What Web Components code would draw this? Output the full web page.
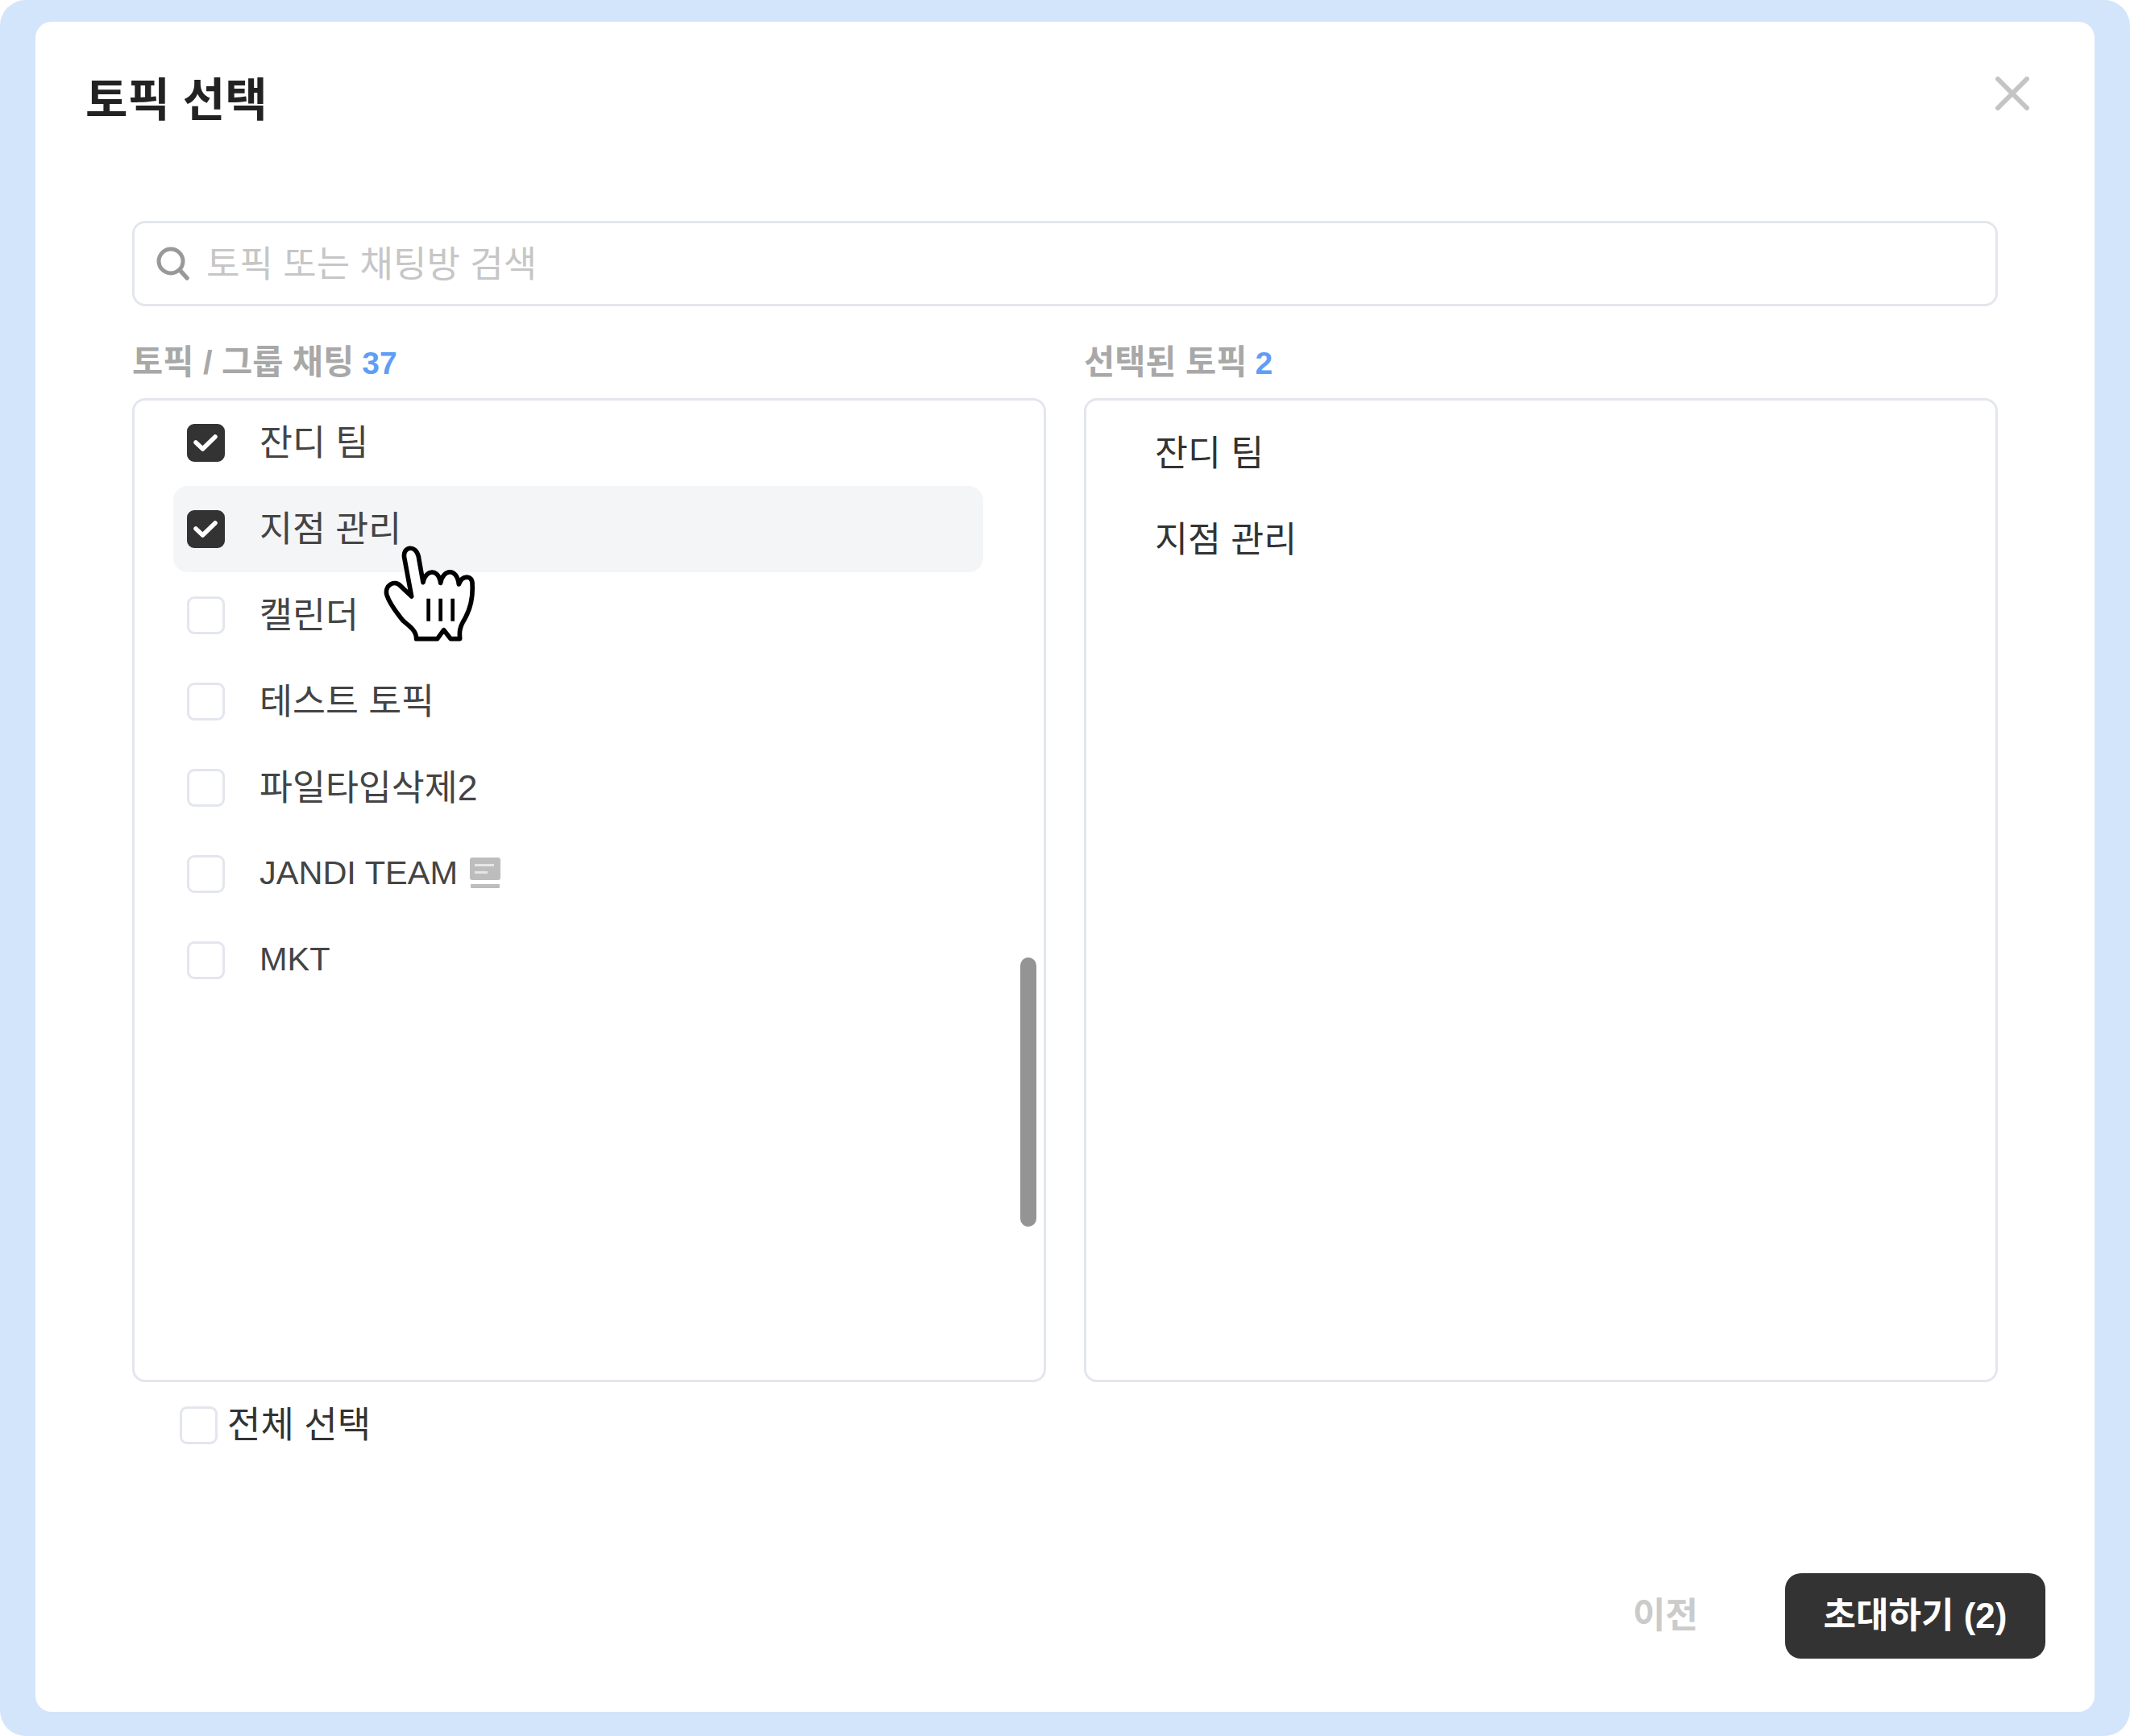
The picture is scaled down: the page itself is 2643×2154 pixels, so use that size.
<!DOCTYPE html>
<html lang="ko">
<head>
<meta charset="utf-8">
<title>토픽 선택</title>
<style>
  html, body { margin: 0; padding: 0; background: #fff; }
  body { font-family: "Liberation Sans", "Noto Sans CJK KR", sans-serif; color: #333; }
</style>
</head>
<body>
<app-frame>
  <topic-dialog heading="토픽 선택">
    <search-box slot="search" placeholder="토픽 또는 채팅방 검색"></search-box>

    <pick-list slot="left" label="토픽 / 그룹 채팅" count="37" scrollbar>
      <topic-row checked>잔디 팀</topic-row>
      <topic-row checked hover>지점 관리</topic-row>
      <topic-row>캘린더</topic-row>
      <topic-row>테스트 토픽</topic-row>
      <topic-row>파일타입삭제2</topic-row>
      <topic-row latin note>JANDI TEAM</topic-row>
      <topic-row latin>MKT</topic-row>
    </pick-list>

    <pick-list slot="right" label="선택된 토픽" count="2" inset>
      <picked-row>잔디 팀</picked-row>
      <picked-row>지점 관리</picked-row>
    </pick-list>

    <select-all slot="all">전체 선택</select-all>

    <dialog-button slot="actions" kind="ghost">이전</dialog-button>
    <dialog-button slot="actions" kind="primary">초대하기 (2)</dialog-button>
  </topic-dialog>
  <hand-cursor></hand-cursor>
</app-frame>

<script>
  const FONT = '"Liberation Sans", "Noto Sans CJK KR", sans-serif';

  class AppFrame extends HTMLElement {
    constructor() {
      super();
      this.attachShadow({ mode: "open" });
      this.shadowRoot.innerHTML =
        "<style>" +
        ":host { display: block; position: relative; width: 2643px; height: 2154px; box-sizing: border-box;" +
        " padding: 27px 44px 30px 44px; background: #d3e5fb; border-radius: 32px; overflow: hidden; }" +
        "</style><slot></slot>";
    }
  }

  class TopicDialog extends HTMLElement {
    constructor() {
      super();
      this.attachShadow({ mode: "open" });
      this.shadowRoot.innerHTML =
        "<style>" +
        ":host { display: flex; flex-direction: column; height: 100%; box-sizing: border-box; background: #fff;" +
        " border-radius: 20px; font-family: " + FONT + "; }" +
        "header { display: flex; justify-content: space-between; align-items: center; height: 188px;" +
        " padding: 0 81px 0 62px; box-sizing: border-box; margin-bottom: 59px; }" +
        "h1 { margin: 0; font-size: 57px; font-weight: 700; color: #222; line-height: 1; position: relative; top: 3px; }" +
        "svg { display: block; width: 42px; height: 42px; margin-top: -10px; }" +
        ".body { padding: 0 120px 0 120px; }" +
        ".cols { display: grid; grid-template-columns: 1134px 1134px; column-gap: 47px; margin-top: 47px; }" +
        ".all { margin-top: 30px; padding-left: 59px; }" +
        "footer { margin-top: auto; display: flex; justify-content: flex-end; align-items: center; padding: 0 61px 66px 0; }" +
        "</style>" +
        "<header><h1></h1>" +
        '<svg viewBox="0 0 42 42"><path d="M3 3 L39 39 M39 3 L3 39" stroke="#c4c4c4" stroke-width="6" stroke-linecap="round" fill="none"/></svg>' +
        "</header>" +
        '<div class="body"><slot name="search"></slot>' +
        '<div class="cols"><slot name="left"></slot><slot name="right"></slot></div>' +
        '<div class="all"><slot name="all"></slot></div></div>' +
        '<footer><slot name="actions"></slot></footer>';
    }

    connectedCallback() {
      this.shadowRoot.querySelector("h1").textContent = this.getAttribute("heading") || "";
    }
  }

  class SearchBox extends HTMLElement {
    constructor() {
      super();
      this.attachShadow({ mode: "open" });
      this.shadowRoot.innerHTML =
        "<style>" +
        ":host { display: flex; align-items: center; height: 106px; box-sizing: border-box; padding-left: 26px;" +
        " border: 3px solid #e3e6ee; border-radius: 16px; background: #fff; }" +
        "svg { width: 42px; height: 42px; flex: none; margin-right: 21px; }" +
        "span { font-size: 45px; color: #c6c6c6; line-height: 1; position: relative; top: 1px; }" +
        "</style>" +
        '<svg viewBox="0 0 42 42" fill="none" stroke="#999" stroke-width="5"><circle cx="19" cy="18" r="15"/><path d="M30 29 L39 39" stroke-linecap="round" stroke-width="5.5"/></svg>' +
        "<span></span>";
    }

    connectedCallback() {
      this.shadowRoot.querySelector("span").textContent = this.getAttribute("placeholder") || "";
    }
  }

  class PickList extends HTMLElement {
    constructor() {
      super();
      this.attachShadow({ mode: "open" });
      this.shadowRoot.innerHTML =
        "<style>" +
        ":host { display: block; }" +
        ".label { display: flex; gap: 10px; height: 46px; align-items: center; font-size: 41.5px; font-weight: 700; color: #a8a8a8; line-height: 1; margin-bottom: 21px; }" +
        ".count { color: #5f9ef5; font-size: 39px; }" +
        ".box { position: relative; height: 1221px; box-sizing: border-box; border: 3px solid #e3e6ee; border-radius: 16px; padding-left: 48px; overflow: hidden; }" +
        ".rows { margin-top: -1.5px; }" +
        ":host([inset]) .box { padding: 13px 0 0 85px; }" +
        ":host([inset]) .rows { margin-top: 0; }" +
        ".bar { display: none; position: absolute; left: 1099px; top: 691px; width: 20px; height: 334px; background: #949494; border-radius: 10px; }" +
        ":host([scrollbar]) .bar { display: block; }" +
        "</style>" +
        '<div class="label"><span class="name"></span><span class="count"></span></div>' +
        '<div class="box"><div class="rows"><slot></slot></div><div class="bar"></div></div>';
    }

    connectedCallback() {
      this.shadowRoot.querySelector(".name").textContent = this.getAttribute("label") || "";
      this.shadowRoot.querySelector(".count").textContent = this.getAttribute("count") || "";
    }
  }

  class CheckBox extends HTMLElement {
    constructor() {
      super();
      this.attachShadow({ mode: "open" });
      this.shadowRoot.innerHTML =
        "<style>" +
        ":host { display: flex; flex: none; width: 47px; height: 47px; box-sizing: border-box; border: 3px solid #e3e6ee; border-radius: 9px; background: #fff; }" +
        ":host([checked]) { background: #333; border-color: #333; }" +
        "svg { display: none; width: 41px; height: 41px; }" +
        ":host([checked]) svg { display: block; }" +
        "</style>" +
        '<svg viewBox="0 0 41 41"><path d="M8 20 L16.5 28 L32 13" fill="none" stroke="#fff" stroke-width="5.5" stroke-linecap="round" stroke-linejoin="round"/></svg>';
    }
  }

  class TopicRow extends HTMLElement {
    constructor() {
      super();
      this.attachShadow({ mode: "open" });
      this.shadowRoot.innerHTML =
        "<style>" +
        ":host { display: flex; align-items: center; width: 1005px; height: 107px; box-sizing: border-box; padding-left: 17px; border-radius: 18px; font-size: 44.5px; color: #444; }" +
        ":host([hover]) { background: #f4f5f7; }" +
        ":host([latin]) { font-size: 41.5px; }" +
        "check-box { margin-right: 43px; }" +
        ".note { display: none; width: 38px; height: 38px; margin-left: 15px; position: relative; top: -1px; }" +
        ":host([note]) .note { display: block; }" +
        "span { line-height: 1; position: relative; top: 1px; }" +
        ":host([latin]) span { top: -1px; }" +
        "</style>" +
        "<check-box></check-box><span><slot></slot></span>" +
        '<svg class="note" viewBox="0 0 38 38"><rect x="0" y="0" width="38" height="28" rx="3" fill="#bdbdbd"/><rect x="1" y="33" width="36" height="5" rx="1" fill="#bdbdbd"/><path d="M6 9.5 H30 M6 18.5 H22" stroke="#e6e6e6" stroke-width="3"/></svg>';
    }

    connectedCallback() {
      if (this.hasAttribute("checked")) {
        this.shadowRoot.querySelector("check-box").setAttribute("checked", "");
      }
    }
  }

  class PickedRow extends HTMLElement {
    constructor() {
      super();
      this.attachShadow({ mode: "open" });
      this.shadowRoot.innerHTML =
        "<style>:host { display: flex; align-items: center; height: 107px; font-size: 44.5px; color: #333; }" +
        "span { line-height: 1; }</style><span><slot></slot></span>";
    }
  }

  class SelectAll extends HTMLElement {
    constructor() {
      super();
      this.attachShadow({ mode: "open" });
      this.shadowRoot.innerHTML =
        "<style>:host { display: flex; align-items: center; gap: 12px; font-size: 45px; color: #333; }" +
        "span { line-height: 1; }</style>" +
        "<check-box></check-box><span><slot></slot></span>";
    }
  }

  class DialogButton extends HTMLElement {
    constructor() {
      super();
      this.attachShadow({ mode: "open" });
      this.shadowRoot.innerHTML =
        "<style>" +
        ":host { display: flex; align-items: center; justify-content: center; box-sizing: border-box; height: 106px; font-size: 44px; font-weight: 700; line-height: 1; }" +
        ':host([kind="ghost"]) { color: #cbcbcb; width: 81px; margin-right: 108px; }' +
        ':host([kind="primary"]) { color: #fff; background: #333; width: 323px; border-radius: 20px; }' +
        "span { white-space: nowrap; }" +
        "</style><span><slot></slot></span>";
    }
  }

  // the pointer floats over the list, drawn in the coordinates of a 3x crop
  class HandCursor extends HTMLElement {
    constructor() {
      super();
      this.attachShadow({ mode: "open" });
      this.shadowRoot.innerHTML =
        "<style>:host { position: absolute; left: 470px; top: 670px; width: 130px; height: 135px; pointer-events: none; }" +
        "svg { display: block; width: 100%; height: 100%; }</style>" +
        '<svg viewBox="810 510 390 405" fill="none" stroke="#000" stroke-linejoin="round" stroke-linecap="round">' +
        '<path d="M905 575 C898 535 948 525 958 572 L975 668 C982 622 1032 612 1040 670 C1048 618 1102 612 1108 675 C1120 640 1158 640 1158 672 C1162 730 1150 772 1125 812 C1110 838 1110 855 1112 878 L1078 878 L1052 845 L1028 878 L950 878 C950 850 930 835 900 810 C878 782 852 752 840 715 C830 680 868 655 892 682 L932 720 Z" fill="#fff" stroke-width="17"/>' +
        '<path d="M995 728 V812 M1040 728 V812 M1085 728 V812" stroke-width="14" stroke-linecap="butt"/>' +
        "</svg>";
    }
  }

  customElements.define("app-frame", AppFrame);
  customElements.define("topic-dialog", TopicDialog);
  customElements.define("search-box", SearchBox);
  customElements.define("pick-list", PickList);
  customElements.define("check-box", CheckBox);
  customElements.define("topic-row", TopicRow);
  customElements.define("picked-row", PickedRow);
  customElements.define("select-all", SelectAll);
  customElements.define("dialog-button", DialogButton);
  customElements.define("hand-cursor", HandCursor);
</script>
</body>
</html>
